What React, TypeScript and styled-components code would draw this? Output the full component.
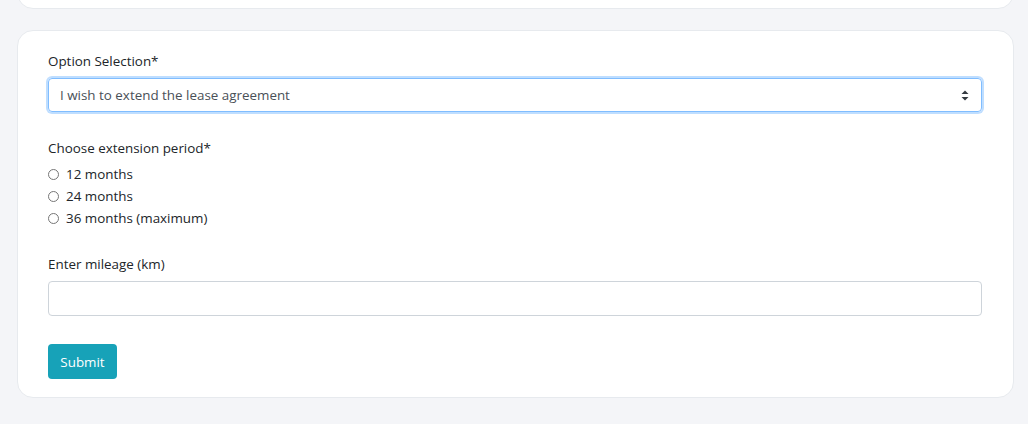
import React from "react";
import styled, { createGlobalStyle } from "styled-components";

const Global = createGlobalStyle`
  html, body { margin: 0; padding: 0; background: #f4f5f8; }
  body { font-family: "Open Sans", "Noto Sans", "Liberation Sans", sans-serif; color: #212529; }
  * { box-sizing: border-box; }
`;

const Page = styled.div`
  display: flex;
  flex-direction: column;
  gap: 21px;
  padding: 0 14px 0 17px;
  width: 1028px;
  height: 424px;
  overflow: hidden;
`;

const Card = styled.div<{ $stub?: boolean }>`
  background: #fff;
  border: 1px solid #e7eaee;
  border-radius: 16px;
  ${(p) =>
    p.$stub
      ? `height: 49px; margin-top: -40px; flex: none;`
      : `padding: 21px 31px 18px 30px;`}
`;

const Form = styled.form`
  display: flex;
  flex-direction: column;
`;

const Group = styled.div<{ $mb: number }>`
  display: flex;
  flex-direction: column;
  margin-bottom: ${(p) => p.$mb}px;
`;

const Label = styled.label<{ $gap?: number }>`
  font-size: 13.4px;
  line-height: 18px;
  color: #212529;
  margin-bottom: ${(p) => p.$gap ?? 8}px;
`;

const SelectBox = styled.div`
  position: relative;
  height: 34px;
  border: 1px solid #80bdff;
  border-radius: 4px;
  box-shadow: 0 0 0 2px rgba(0, 123, 255, 0.25);
  display: flex;
  align-items: center;
  padding: 0 12px 0 11px;
  font-size: 13.4px;
  color: #495057;
`;

const SelectText = styled.span`
  flex: 1;
`;

const Radios = styled.div`
  display: flex;
  flex-direction: column;
  gap: 4px;
`;

const RadioRow = styled.label`
  display: flex;
  align-items: center;
  gap: 7px;
  font-size: 13.4px;
  line-height: 18px;
  color: #212529;
`;

const RadioDot = styled.span`
  width: 11px;
  height: 11px;
  border: 1px solid #767676;
  border-radius: 50%;
  background: #fff;
  flex: none;
`;

const TextInput = styled.div`
  height: 35px;
  border: 1px solid #ced4da;
  border-radius: 4px;
  background: #fff;
`;

const Button = styled.button`
  align-self: flex-start;
  height: 35px;
  width: 69px;
  border: none;
  border-radius: 4px;
  background: #17a2b8;
  color: #fff;
  font-family: inherit;
  font-size: 13.4px;
  padding: 0;
`;

export default function App() {
  return (
    <>
      <Global />
      <Page>
        <Card $stub />
        <Card>
          <Form onSubmit={(e) => e.preventDefault()}>
            <Group $mb={27}>
              <Label>Option Selection*</Label>
              <SelectBox>
                <SelectText>I wish to extend the lease agreement</SelectText>
                <svg width="8" height="11" viewBox="0 0 8 11">
                  <path d="M4 0.5 L7.5 4 L0.5 4 Z" fill="#343a40" />
                  <path d="M4 10.5 L7.5 7 L0.5 7 Z" fill="#343a40" />
                </svg>
              </SelectBox>
            </Group>
            <Group $mb={28}>
              <Label>Choose extension period*</Label>
              <Radios>
                <RadioRow><RadioDot />12 months</RadioRow>
                <RadioRow><RadioDot />24 months</RadioRow>
                <RadioRow><RadioDot />36 months (maximum)</RadioRow>
              </Radios>
            </Group>
            <Group $mb={28}>
              <Label>Enter mileage (km)</Label>
              <TextInput />
            </Group>
            <Button type="submit">Submit</Button>
          </Form>
        </Card>
      </Page>
    </>
  );
}
